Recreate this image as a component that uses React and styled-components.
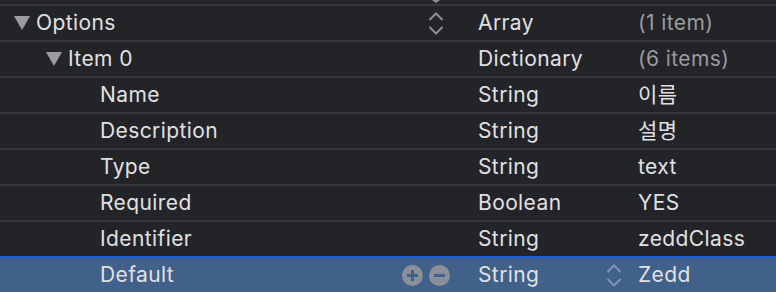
import React from "react";
import styled, { createGlobalStyle } from "styled-components";

const Global = createGlobalStyle`
  html, body { margin: 0; padding: 0; background: #232428; }
  body { width: 776px; height: 292px; overflow: hidden; }
  * { box-sizing: border-box; }
`;

const Table = styled.div`
  width: 776px;
  display: flex;
  flex-direction: column;
  background: #232428;
  font-family: Inter, "Noto Sans", "Noto Sans CJK KR", sans-serif;
  font-size: 21px;
  letter-spacing: 0.4px;
  color: #e0e0e2;
`;

const TopStrip = styled.div`
  height: 4px;
  display: flex;
  justify-content: flex-start;
  padding-left: 430px;
  overflow: hidden;
`;

const Row = styled.div`
  height: 36px;
  display: grid;
  grid-template-columns: 479px 160px 1fr;
  align-items: center;
  border-top: 2px solid ${(p) => (p.$selected ? "#1c5fd5" : "#37383c")};
  background: ${(p) => (p.$selected ? "#41618b" : "transparent")};
`;

const KeyCell = styled.div`
  display: flex;
  align-items: center;
  height: 100%;
  padding-left: ${(p) => 14 + p.$depth * 32}px;
  padding-right: ${(p) => p.$pr}px;
`;

const Disclosure = styled.span`
  width: 16px;
  height: 14px;
  margin-right: 7px;
  display: flex;
  align-items: center;
  justify-content: center;
  flex-shrink: 0;
`;

const Label = styled.span`
  white-space: nowrap;
  line-height: 1;
  margin-left: -1px;
  padding-bottom: 2px;
  color: ${(p) => (p.$muted ? "#9a9a9f" : "inherit")};
`;

const Spacer = styled.span`
  flex: 1;
`;

const TypeCell = styled.div`
  display: flex;
  align-items: center;
  height: 100%;
  padding-right: 17px;
`;

const ValueCell = styled.div`
  display: flex;
  align-items: center;
  height: 100%;
`;

const Circles = styled.span`
  display: flex;
  gap: 6px;
  align-items: center;
`;

const Triangle = () => (
  <svg width="16" height="14" viewBox="0 0 16 14">
    <polygon points="0,0 16,0 8,14" fill="#9b9b9e" />
  </svg>
);

const Stepper = ({ color = "#8e8e93" }) => (
  <svg width="16" height="23" viewBox="0 0 16 23" fill="none">
    <polyline points="1.5,8 8,1.5 14.5,8" stroke={color} strokeWidth="2" />
    <polyline points="1.5,15 8,21.5 14.5,15" stroke={color} strokeWidth="2" />
  </svg>
);

const PlusCircle = () => (
  <svg width="21" height="21" viewBox="0 0 21 21">
    <circle cx="10.5" cy="10.5" r="10.5" fill="#8a9099" />
    <rect x="5" y="9" width="11" height="3" fill="#41618b" />
    <rect x="9" y="5" width="3" height="11" fill="#41618b" />
  </svg>
);

const MinusCircle = () => (
  <svg width="21" height="21" viewBox="0 0 21 21">
    <circle cx="10.5" cy="10.5" r="10.5" fill="#8a9099" />
    <rect x="5" y="9" width="11" height="3" fill="#41618b" />
  </svg>
);

const rows = [
  { key: "Options", depth: 0, open: true, type: "Array", value: "(1 item)", muted: true, keyStepper: true },
  { key: "Item 0", depth: 1, open: true, type: "Dictionary", value: "(6 items)", muted: true },
  { key: "Name", depth: 2, type: "String", value: "이름" },
  { key: "Description", depth: 2, type: "String", value: "설명" },
  { key: "Type", depth: 2, type: "String", value: "text" },
  { key: "Required", depth: 2, type: "Boolean", value: "YES" },
  { key: "Identifier", depth: 2, type: "String", value: "zeddClass" },
  { key: "Default", depth: 2, type: "String", value: "Zedd", selected: true },
];

export default function App() {
  return (
    <>
      <Global />
      <Table>
        <TopStrip>
          <svg width="12" height="4" viewBox="0 0 12 4">
            <polygon points="2,0 10,0 6,3" fill="#8e8e93" />
          </svg>
        </TopStrip>
        {rows.map((r) => (
          <Row key={r.key} $selected={r.selected}>
            <KeyCell $depth={r.depth} $pr={r.selected ? 29 : 35}>
              <Disclosure>{r.open ? <Triangle /> : null}</Disclosure>
              <Label>{r.key}</Label>
              <Spacer />
              {r.keyStepper && <Stepper />}
              {r.selected && (
                <Circles>
                  <PlusCircle />
                  <MinusCircle />
                </Circles>
              )}
            </KeyCell>
            <TypeCell>
              <Label>{r.type}</Label>
              <Spacer />
              {r.selected && <Stepper color="#7f94b0" />}
            </TypeCell>
            <ValueCell>
              <Label $muted={r.muted}>{r.value}</Label>
            </ValueCell>
          </Row>
        ))}
      </Table>
    </>
  );
}
